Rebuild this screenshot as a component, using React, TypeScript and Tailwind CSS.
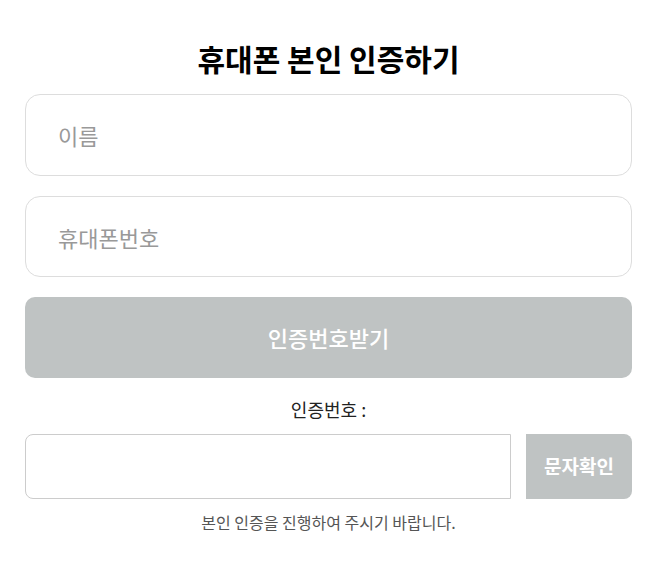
import React from 'react';

const font = { fontFamily: '"Noto Sans CJK KR", "Noto Sans", sans-serif' };

export default function App() {
    return (
        <div className="min-h-screen bg-white pl-[25px] pr-[24px] pt-[35px]" style={font}>
            <h1 className="text-center text-[30px] font-bold leading-[46px] text-black">
                휴대폰 본인 인증하기
            </h1>

            <div className="mt-[13px] flex flex-col gap-[20px]">
                <input
                    type="text"
                    placeholder="이름"
                    className="h-[82px] w-full rounded-[15px] border border-[#dddddd] px-[32px] text-[22px] text-[#333] placeholder:text-[#999] focus:outline-none"
                />
                <input
                    type="text"
                    placeholder="휴대폰번호"
                    className="h-[81px] w-full rounded-[15px] border border-[#dddddd] px-[32px] text-[22px] text-[#333] placeholder:text-[#999] focus:outline-none"
                />
                <button className="h-[81px] w-full rounded-[10px] bg-[#bfc3c3] text-[22px] font-medium text-white">
                    인증번호받기
                </button>
            </div>

            <p className="mt-[18px] text-center text-[18px] leading-[26px] text-[#222]">인증번호 :</p>

            <div className="mt-[12px] flex gap-[15px]">
                <input
                    type="text"
                    className="h-[65px] flex-1 rounded-l-[8px] border border-[#cccccc] px-4 text-[18px] focus:outline-none"
                />
                <button className="h-[65px] w-[106px] rounded-r-[8px] bg-[#bfc3c3] text-[19px] font-bold text-white">
                    문자확인
                </button>
            </div>

            <p className="mt-[11px] text-center text-[16px] leading-[24px] text-[#555]">
                본인 인증을 진행하여 주시기 바랍니다.
            </p>
        </div>
    );
}
